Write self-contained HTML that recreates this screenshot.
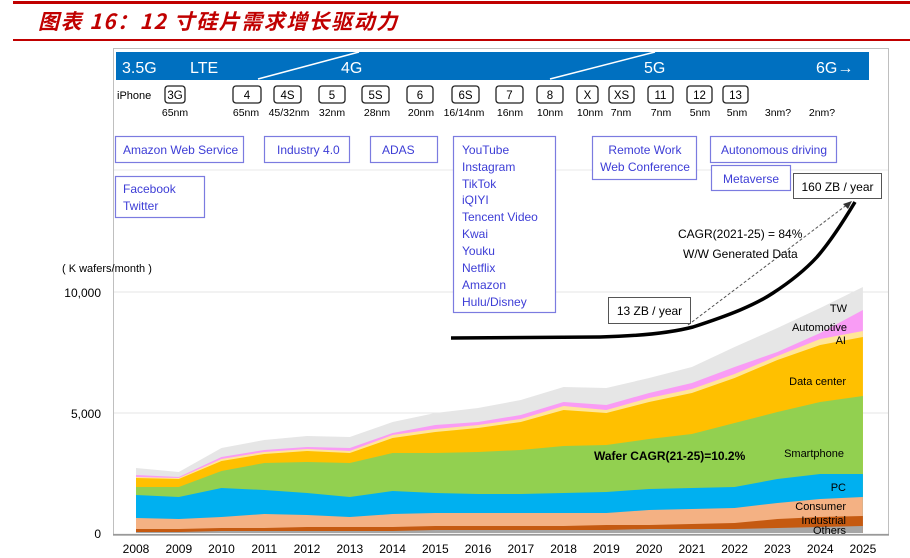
<!DOCTYPE html>
<html><head><meta charset="utf-8"><style>
body{margin:0;background:#fff;}
svg{display:block;font-family:"Liberation Sans","Noto Sans CJK SC",sans-serif;}
</style></head><body>
<svg width="910" height="558" viewBox="0 0 910 558" xmlns="http://www.w3.org/2000/svg">
<rect x="13" y="1" width="897" height="3" fill="#c00000"/>
<text x="38" y="29" font-size="21" letter-spacing="1.5" font-weight="bold" font-style="italic" fill="#c00000" font-family="'Noto Sans CJK SC','Liberation Sans',sans-serif">图表 16：12 寸硅片需求增长驱动力</text>
<rect x="13" y="39" width="897" height="2" fill="#c00000"/>

<rect x="113.5" y="48.5" width="775" height="487" fill="none" stroke="#bfbfbf"/>
<line x1="114" y1="170" x2="888" y2="170" stroke="#e8e8e8"/>
<line x1="114" y1="292" x2="888" y2="292" stroke="#e4e4e4"/>
<line x1="114" y1="413" x2="888" y2="413" stroke="#e4e4e4"/>

<rect x="116" y="52" width="753" height="28" fill="#0070c0"/>
<line x1="258" y1="79" x2="359" y2="52" stroke="#fff" stroke-width="1.5"/>
<line x1="550" y1="79" x2="655" y2="52" stroke="#fff" stroke-width="1.5"/>
<g fill="#fff" font-size="16">
<text x="122" y="73">3.5G</text><text x="190" y="73">LTE</text>
<text x="341" y="73">4G</text><text x="644" y="73">5G</text><text x="816" y="73">6G→</text>
</g>
<g font-size="11" fill="#000">
<text x="117" y="99">iPhone</text>
</g>
<g fill="#fff" stroke="#222" stroke-width="1.3">
<rect x="165" y="86" width="20" height="17" rx="3"/>
<rect x="233" y="86" width="28" height="17" rx="3"/>
<rect x="274" y="86" width="27" height="17" rx="3"/>
<rect x="319" y="86" width="26" height="17" rx="3"/>
<rect x="362" y="86" width="27" height="17" rx="3"/>
<rect x="407" y="86" width="26" height="17" rx="3"/>
<rect x="452" y="86" width="27" height="17" rx="3"/>
<rect x="496" y="86" width="27" height="17" rx="3"/>
<rect x="537" y="86" width="26" height="17" rx="3"/>
<rect x="577" y="86" width="21" height="17" rx="3"/>
<rect x="609" y="86" width="25" height="17" rx="3"/>
<rect x="648" y="86" width="25" height="17" rx="3"/>
<rect x="687" y="86" width="25" height="17" rx="3"/>
<rect x="723" y="86" width="25" height="17" rx="3"/>
</g>
<g font-size="11.5" fill="#000" text-anchor="middle">
<text x="175" y="99">3G</text><text x="247" y="99">4</text><text x="287.5" y="99">4S</text><text x="332" y="99">5</text>
<text x="375.5" y="99">5S</text><text x="420" y="99">6</text><text x="465.5" y="99">6S</text><text x="509.5" y="99">7</text>
<text x="550" y="99">8</text><text x="587.5" y="99">X</text><text x="621.5" y="99">XS</text><text x="660.5" y="99">11</text>
<text x="699.5" y="99">12</text><text x="735.5" y="99">13</text>
</g>
<g font-size="10.5" fill="#000" text-anchor="middle">
<text x="175" y="116">65nm</text><text x="246" y="116">65nm</text><text x="289" y="116">45/32nm</text><text x="332" y="116">32nm</text>
<text x="377" y="116">28nm</text><text x="421" y="116">20nm</text><text x="464" y="116">16/14nm</text><text x="510" y="116">16nm</text>
<text x="550" y="116">10nm</text><text x="590" y="116">10nm</text><text x="621" y="116">7nm</text><text x="661" y="116">7nm</text>
<text x="700" y="116">5nm</text><text x="737" y="116">5nm</text><text x="778" y="116">3nm?</text><text x="822" y="116">2nm?</text>
</g>

<g fill="#fff" stroke="#7b7be0" stroke-width="1.2">
<rect x="115.5" y="136.5" width="128" height="26"/>
<rect x="264.5" y="136.5" width="85" height="26"/>
<rect x="370.5" y="136.5" width="67" height="26"/>
<rect x="453.5" y="136.5" width="102" height="176"/>
<rect x="592.5" y="136.5" width="104" height="43"/>
<rect x="710.5" y="136.5" width="126" height="26"/>
<rect x="711.5" y="165.5" width="79" height="25"/>
<rect x="115.5" y="176.5" width="89" height="41"/>
</g>
<g font-size="12" fill="#3d3dd6">
<text x="123" y="154">Amazon Web Service</text>
<text x="277" y="154">Industry 4.0</text>
<text x="382" y="154">ADAS</text>
<text x="462" y="154">YouTube</text><text x="462" y="171">Instagram</text><text x="462" y="188">TikTok</text>
<text x="462" y="204">iQIYI</text><text x="462" y="221">Tencent Video</text><text x="462" y="238">Kwai</text>
<text x="462" y="255">Youku</text><text x="462" y="272">Netflix</text><text x="462" y="289">Amazon</text><text x="462" y="306">Hulu/Disney</text>
<text x="645" y="154" text-anchor="middle">Remote Work</text><text x="645" y="171" text-anchor="middle">Web Conference</text>
<text x="774" y="154" text-anchor="middle">Autonomous driving</text>
<text x="751" y="183" text-anchor="middle">Metaverse</text>
<text x="123" y="193">Facebook</text><text x="123" y="210">Twitter</text>
</g>

<text x="62" y="272" font-size="11">( K wafers/month )</text>
<g font-size="12" text-anchor="end" fill="#000">
<text x="101" y="297">10,000</text><text x="101" y="418">5,000</text><text x="101" y="538">0</text>
</g>

<g>
<polygon fill="#e6e6e6" points="136,468 178.8,472 221.5,448 264.3,440 307,436 349.8,437 392.6,422 435.3,413 478.1,408 520.8,400 563.6,387 606.4,388 649.1,378 691.9,367 734.6,347 777.4,328 820.2,308 862.9,287 862.9,533 136,533"/>
<polygon fill="#f99cf5" points="136,475 178.8,477 221.5,457 264.3,450 307,447 349.8,448 392.6,433 435.3,425 478.1,422 520.8,415 563.6,402 606.4,405 649.1,393 691.9,383 734.6,367 777.4,352 820.2,333 862.9,310 862.9,533 136,533"/>
<polygon fill="#ffe699" points="136,477 178.8,478 221.5,459 264.3,452 307,449 349.8,451 392.6,435 435.3,429 478.1,425 520.8,419 563.6,406 606.4,410 649.1,398 691.9,389 734.6,374 777.4,356 820.2,339 862.9,331 862.9,533 136,533"/>
<polygon fill="#ffc000" points="136,478 178.8,479 221.5,461 264.3,454 307,451 349.8,453 392.6,438 435.3,432 478.1,428 520.8,422 563.6,410 606.4,413 649.1,402 691.9,393 734.6,378 777.4,360 820.2,345 862.9,337 862.9,533 136,533"/>
<polygon fill="#92d050" points="136,487 178.8,487 221.5,471 264.3,463 307,462 349.8,463 392.6,453 435.3,453 478.1,452 520.8,450 563.6,446 606.4,445 649.1,439 691.9,434 734.6,423 777.4,412 820.2,402 862.9,396 862.9,533 136,533"/>
<polygon fill="#00b0f0" points="136,495 178.8,497 221.5,488 264.3,490 307,493 349.8,497 392.6,491 435.3,493 478.1,494 520.8,494 563.6,493 606.4,492 649.1,489 691.9,488 734.6,487 777.4,479 820.2,474 862.9,474 862.9,533 136,533"/>
<polygon fill="#f4b183" points="136,518 178.8,519 221.5,517 264.3,514 307,515 349.8,517 392.6,514 435.3,513 478.1,513 520.8,513 563.6,513 606.4,513 649.1,510 691.9,509 734.6,508 777.4,503 820.2,499 862.9,497 862.9,533 136,533"/>
<polygon fill="#c55a11" points="136,529 178.8,529 221.5,528 264.3,528 307,527 349.8,527 392.6,527 435.3,526 478.1,526 520.8,526 563.6,526 606.4,525 649.1,525 691.9,524 734.6,523 777.4,519 820.2,517 862.9,516 862.9,533 136,533"/>
<polygon fill="#a6a6a6" points="136,532 178.8,532 221.5,531 264.3,531 307,531 349.8,531 392.6,531 435.3,530 478.1,530 520.8,530 563.6,530 606.4,530 649.1,529 691.9,529 734.6,529 777.4,528 820.2,527 862.9,526 862.9,533 136,533"/>
</g>
<line x1="113" y1="534.5" x2="889" y2="534.5" stroke="#999" stroke-width="1.2"/>

<g font-size="11" fill="#000" text-anchor="end">
<text x="847" y="312">TW</text><text x="847" y="331">Automotive</text><text x="846" y="344">AI</text>
<text x="846" y="385">Data center</text><text x="844" y="457">Smartphone</text><text x="846" y="491">PC</text>
<text x="846" y="510">Consumer</text><text x="846" y="524">Industrial</text><text x="846" y="534">Others</text>
</g>
<text x="594" y="460" font-size="12" font-weight="bold">Wafer CAGR(21-25)=10.2%</text>

<line x1="688" y1="325" x2="848" y2="204" stroke="#555" stroke-width="1" stroke-dasharray="3,2"/>
<polygon points="852,201 843,204 848,209" fill="#333"/>
<path d="M451,338 L600,337 C640,336 670,333 693,327 C730,315 755,305 773,293 C790,282 805,270 817,257 C830,242 843,222 855,202" fill="none" stroke="#000" stroke-width="3.5"/>
<rect x="793.5" y="173.5" width="88" height="25" fill="#fff" stroke="#555"/>
<text x="837.5" y="191" font-size="12" text-anchor="middle">160 ZB / year</text>
<rect x="608.5" y="297.5" width="82" height="26" fill="#fff" stroke="#555"/>
<text x="649.5" y="315" font-size="12" text-anchor="middle">13 ZB / year</text>
<text x="678" y="238" font-size="12">CAGR(2021-25) = 84%</text>
<text x="683" y="258" font-size="12">W/W Generated Data</text>

<g font-size="12" text-anchor="middle" fill="#000">
<text x="136" y="553">2008</text><text x="178.8" y="553">2009</text><text x="221.5" y="553">2010</text><text x="264.3" y="553">2011</text>
<text x="307" y="553">2012</text><text x="349.8" y="553">2013</text><text x="392.6" y="553">2014</text><text x="435.3" y="553">2015</text>
<text x="478.1" y="553">2016</text><text x="520.8" y="553">2017</text><text x="563.6" y="553">2018</text><text x="606.4" y="553">2019</text>
<text x="649.1" y="553">2020</text><text x="691.9" y="553">2021</text><text x="734.6" y="553">2022</text><text x="777.4" y="553">2023</text>
<text x="820.2" y="553">2024</text><text x="862.9" y="553">2025</text>
</g>
</svg>
</body></html>
